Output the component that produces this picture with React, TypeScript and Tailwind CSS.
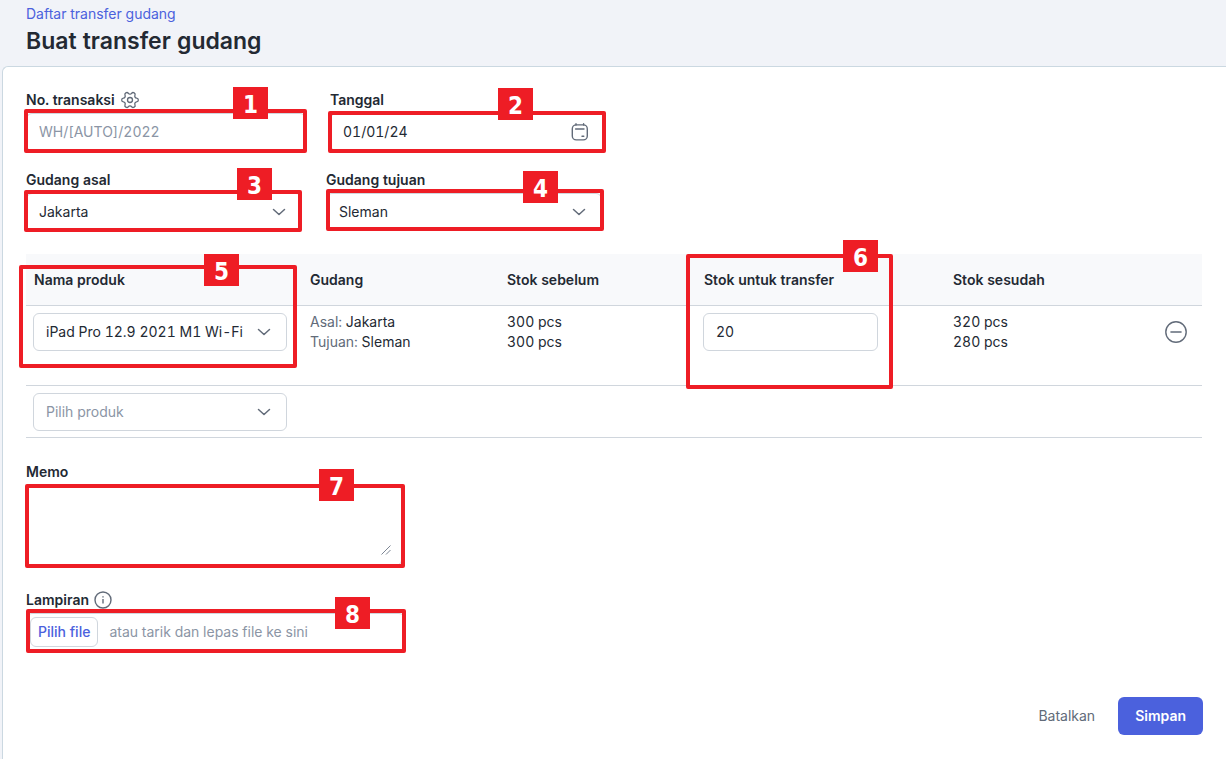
import { useState } from "react";
import type { ReactNode } from "react";
import { Settings } from "lucide-react";

const control =
  "h-[38px] w-full rounded-md border border-[#d0d6dd] bg-white px-3 text-sm leading-5 outline-none placeholder:text-[#8b95a5]";

function Marker({ n, box, tag }: { n: number; box: string; tag: string }) {
  return (
    <div className={`pointer-events-none absolute z-10 rounded-[2px] border-4 border-[#ee1d25] ${box}`}>
      <span
        className={`absolute mt-px ml-px flex h-8 w-[35px] items-center justify-center bg-[#ee1d25] pt-[3px] font-['DejaVu_Sans_Condensed','DejaVu_Sans',sans-serif] text-2xl leading-8 font-bold text-white ${tag}`}
      >
        {n}
      </span>
    </div>
  );
}

function Chevron() {
  return (
    <svg
      viewBox="0 0 14 8"
      className="pointer-events-none absolute top-[15px] right-4 h-2 w-3.5"
      fill="none"
      stroke="#626b79"
      strokeWidth="1.5"
      strokeLinecap="round"
      strokeLinejoin="round"
      aria-hidden="true"
    >
      <path d="M1.500 1.500 7 6.500l5.500-5" />
    </svg>
  );
}

function Dropdown({
  id,
  label,
  options,
  muted = false,
}: {
  id: string;
  label?: string;
  options: string[];
  muted?: boolean;
}) {
  const [value, setValue] = useState(options[0]);
  return (
    <>
      <select
        id={id}
        aria-label={label}
        value={value}
        onChange={(e) => setValue(e.target.value)}
        className={`${control} appearance-none ${muted ? "text-[#8b95a5]" : "text-[#232933]"}`}
      >
        {options.map((o) => (
          <option key={o}>{o}</option>
        ))}
      </select>
      <Chevron />
    </>
  );
}

function Field({
  id,
  label,
  width,
  icon,
  children,
}: {
  id: string;
  label: string;
  width: string;
  icon?: ReactNode;
  children: ReactNode;
}) {
  return (
    <div className={`flex max-w-full flex-col gap-[3px] ${width}`}>
      <div className="flex h-5 items-center gap-[5px]">
        <label htmlFor={id} className="text-sm leading-5 font-semibold">
          {label}
        </label>
        {icon}
      </div>
      <div className="relative">{children}</div>
    </div>
  );
}

function CalendarIcon() {
  return (
    <svg
      viewBox="0 0 18 18"
      className="pointer-events-none absolute top-2.5 right-[17px] size-[18px]"
      fill="none"
      stroke="#626b79"
      strokeWidth="1.4"
      strokeLinecap="round"
      aria-hidden="true"
    >
      <rect x="1.3" y="1.9" width="15" height="15" rx="4" />
      <path d="M5 .7v1.4M12.6 .7v1.4M4.6 6h8.4M11 13.3h1.8" />
    </svg>
  );
}

function InfoIcon() {
  return (
    <svg viewBox="0 0 18 18" className="size-[18px]" fill="none" stroke="#626b79" strokeWidth="1.4" aria-hidden="true">
      <circle cx="9" cy="9" r="8" />
      <path d="M9 8v4.6M9 5.2v1.3" />
    </svg>
  );
}

function MinusIcon() {
  return (
    <svg viewBox="0 0 22 22" className="size-[22px]" fill="none" stroke="#626b79" strokeLinecap="round" aria-hidden="true">
      <circle cx="11" cy="11" r="10.2" strokeWidth="1.4" />
      <path d="M6 11h10" strokeWidth="1.6" />
    </svg>
  );
}

export default function App() {
  return (
    <div className="flex min-h-screen flex-col bg-[#f1f3f8] font-['Inter',sans-serif] text-sm leading-5 text-[#232933] tabular-nums">
      <header className="px-[26px] pt-1 pb-[9px]">
        <a href="#daftar" className="block text-[#4b61dd]">
          Daftar transfer gudang
        </a>
        <h1 className="mt-px text-[23px] leading-8 font-semibold">Buat transfer gudang</h1>
      </header>

      <main className="ml-0.5 flex-1 rounded-tl-md border-t border-l border-[#cbd8e1] bg-white pt-[23px] pr-6 pb-6 pl-[23px]">
        <form onSubmit={(e) => e.preventDefault()}>
          <div className="flex flex-wrap gap-x-6 gap-y-[19px]">
            <Field
              id="nomor"
              label="No. transaksi"
              width="w-[280px]"
              icon={
                <button type="button" aria-label="Atur nomor">
                  <Settings size={20} strokeWidth={1.6} className="rotate-90 text-[#626b79]" />
                </button>
              }
            >
              <input id="nomor" placeholder="WH/[AUTO]/2022" className={`${control} pb-0.5`} />
              <Marker n={1} box="-top-1 -right-px -bottom-0.5 -left-0.5" tag="-top-[27px] left-[204px]" />
            </Field>
            <Field id="tanggal" label="Tanggal" width="w-[276px]">
              <input id="tanggal" defaultValue="01/01/24" className={`${control} pb-0.5`} />
              <CalendarIcon />
              <Marker n={2} box="-top-0.5 right-0 -bottom-0.5 -left-0.5" tag="-top-7 left-[165px]" />
            </Field>
          </div>

          <div className="mt-[19px] flex flex-wrap gap-x-6 gap-y-[19px]">
            <Field id="asal" label="Gudang asal" width="w-[276px]">
              <Dropdown id="asal" options={["Jakarta", "Sleman"]} />
              <Marker n={3} box="-top-[3px] right-0 -bottom-px -left-0.5" tag="-top-[27px] left-[208px]" />
            </Field>
            <Field id="tujuan" label="Gudang tujuan" width="w-[276px]">
              <Dropdown id="tujuan" options={["Sleman", "Jakarta"]} />
              <Marker n={4} box="-top-1 -right-0.5 bottom-0 left-0" tag="-top-[23px] left-[192px]" />
            </Field>
          </div>

          <table className="mt-[23px] w-full table-fixed border-separate border-spacing-0 text-left">
            <colgroup>
              <col className="w-[276px]" />
              <col className="w-[197px]" />
              <col className="w-[197px]" />
              <col className="w-[249px]" />
              <col />
              <col className="w-[52px]" />
            </colgroup>
            <thead>
              <tr className="h-[52px] bg-[#f8f9fb] [&>*]:border-b [&>*]:border-[#d0d6dd] [&>*]:px-2 [&>*]:font-semibold">
                <th scope="col">Nama produk</th>
                <th scope="col">Gudang</th>
                <th scope="col">Stok sebelum</th>
                <th scope="col">Stok untuk transfer</th>
                <th scope="col">Stok sesudah</th>
                <td />
              </tr>
            </thead>
            <tbody>
              <tr className="h-20 align-top [&>*]:border-b [&>*]:border-[#d0d6dd]">
                <td className="px-[7px] pt-[7px]">
                  <div className="relative w-[254px]">
                    <Dropdown id="produk-1" label="Nama produk" options={["iPad Pro 12.9 2021 M1 Wi-Fi"]} />
                    <Marker n={5} box="-top-12 -right-2.5 -bottom-[17px] -left-3.5" tag="-top-4 left-[180px]" />
                  </div>
                </td>
                <td className="px-2 pt-1.5">
                  <p>
                    <span className="text-[#626b79]">Asal:</span> Jakarta
                  </p>
                  <p>
                    <span className="text-[#626b79]">Tujuan:</span> Sleman
                  </p>
                </td>
                <td className="px-2 pt-1.5">
                  <p>300 pcs</p>
                  <p>300 pcs</p>
                </td>
                <td className="px-[7px] pt-[7px]">
                  <div className="relative w-[175px]">
                    <input
                      aria-label="Stok untuk transfer"
                      defaultValue="20"
                      inputMode="numeric"
                      className={`${control} pb-0.5`}
                    />
                    <Marker n={6} box="-top-[59px] -right-[15px] -bottom-[38px] -left-[17px]" tag="-top-[19px] left-[152px]" />
                  </div>
                </td>
                <td className="px-2 pt-1.5">
                  <p>320 pcs</p>
                  <p>280 pcs</p>
                </td>
                <td className="pt-[15px]">
                  <button type="button" aria-label="Hapus baris" className="mx-auto block">
                    <MinusIcon />
                  </button>
                </td>
              </tr>
              <tr className="h-[52px] align-top">
                <td colSpan={6} className="border-b border-[#d0d6dd] px-[7px] pt-[7px]">
                  <div className="relative w-[254px]">
                    <Dropdown id="produk-2" label="Pilih produk" options={["Pilih produk"]} muted />
                  </div>
                </td>
              </tr>
            </tbody>
          </table>

          <div className="mt-6 flex flex-col gap-6">
            <Field id="memo" label="Memo" width="w-[376px]">
              <textarea
                id="memo"
                className="block h-[81px] w-full resize-none rounded-md border border-[#d0d6dd] px-3 py-2 outline-none"
              />
              <svg
                viewBox="0 0 10 10"
                className="pointer-events-none absolute right-[11px] bottom-[11px] size-2.5"
                fill="none"
                stroke="#7d8694"
                strokeWidth="1"
                aria-hidden="true"
              >
                <path d="M.5 9.500l9-9M5 9.500 9.500 5" />
              </svg>
              <Marker n={7} box="-top-px -right-[3px] -bottom-0.5 -left-px" tag="-top-5 left-[289px]" />
            </Field>

            <Field
              id="lampiran"
              label="Lampiran"
              width="w-[379px]"
              icon={
                <button type="button" aria-label="Info lampiran">
                  <InfoIcon />
                </button>
              }
            >
              <div className="flex h-[38px] items-center gap-[11px] rounded-md border border-[#d0d6dd] px-[3px]">
                <input id="lampiran" type="file" className="peer sr-only" />
                <label
                  htmlFor="lampiran"
                  className="flex h-[30px] cursor-pointer items-center rounded-md border border-[#d0d6dd] px-[7px] font-medium text-[#4b61dd]"
                >
                  Pilih file
                </label>
                <span className="text-[#8b95a5]">atau tarik dan lepas file ke sini</span>
              </div>
              <Marker n={8} box="-top-1 -right-px -bottom-0.5 left-0" tag="-top-[17px] left-[304px]" />
            </Field>
          </div>

          <div className="mt-[46px] -mr-px flex items-center justify-end gap-[7px]">
            <button type="button" className="h-[38px] px-4 text-[#626b79]">
              Batalkan
            </button>
            <button type="submit" className="h-[38px] rounded-md bg-[#4b61dd] px-[17px] font-semibold text-white">
              Simpan
            </button>
          </div>
        </form>
      </main>
    </div>
  );
}
